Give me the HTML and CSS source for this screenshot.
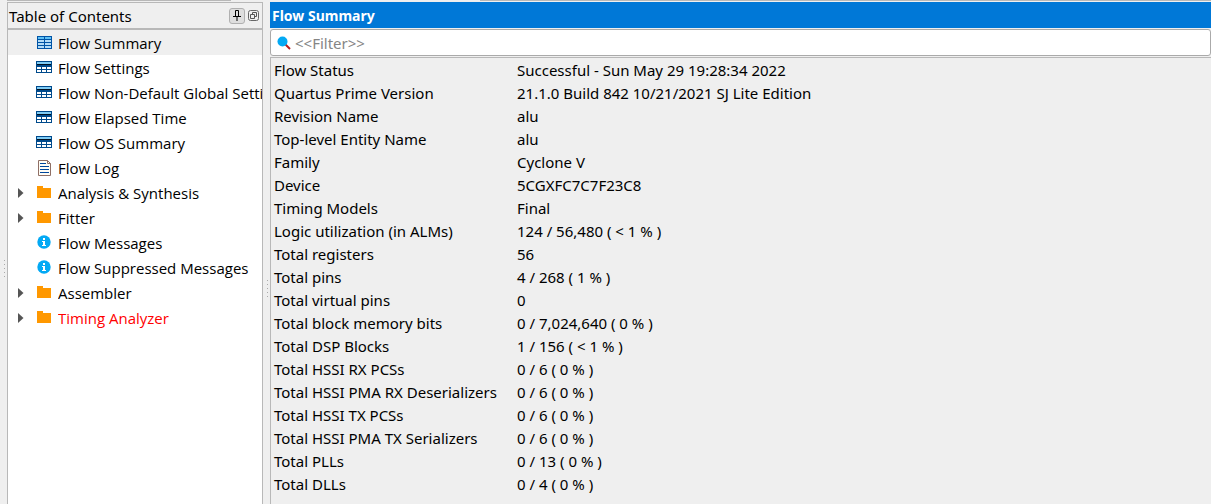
FILE: index.html
```html
<!DOCTYPE html>
<html lang="en">
<head>
<meta charset="utf-8">
<meta name="viewport" content="width=device-width, initial-scale=1">
<title>Flow Summary</title>
<link rel="stylesheet" href="styles.css">
</head>
<body>
<svg class="defs" aria-hidden="true">
  <symbol id="sheet" viewBox="0 0 16 14">
    <path fill="#0054a6" d="M1 1h15v13H1z"/>
    <path fill="#5fc0f5" d="M2 2h6v2H2zm7 0h6v2H9z"/>
    <path fill="#b3dcf7" d="M2 5h6v2H2zm7 0h6v2H9zM2 8h6v2H2zm7 0h6v2H9zM2 11h6v2H2zm7 0h6v2H9z"/>
  </symbol>
  <symbol id="table" viewBox="0 0 16 14">
    <path fill="#004a8c" d="M0 1h16v12H0z"/>
    <path fill="#7fccf5" d="M1 2h14v2H1z"/>
    <path fill="#001020" d="M1 4h14v1H1z"/>
    <path fill="#fff" d="M1 7h4v2H1zm5 0h4v2H6zm5 0h4v2h-4zM1 10h4v2H1zm5 0h4v2H6zm5 0h4v2h-4z"/>
  </symbol>
  <symbol id="log" viewBox="0 0 14 16">
    <path fill="#fffdf5" stroke="#8f6f65" d="M1.500.5h9l3 3v12h-12z"/>
    <path fill="none" stroke="#8f6f65" d="M10.500.5v3h3"/>
    <path stroke="#00479c" d="M3 3.500h6M3 6.500h9M3 9.500h9M3 12.500h9"/>
  </symbol>
  <symbol id="folder" viewBox="0 0 14 12">
    <path fill="#ff9800" d="M0 0h6v2h8v10H0z"/>
  </symbol>
  <symbol id="info" viewBox="0 0 14 14">
    <circle cx="7" cy="7" r="6.700" fill="#03a9f4"/>
    <path fill="#fff" d="M6 3h2v2H6zM5 6h3v4h1v1H5v-1h1V7H5z"/>
  </symbol>
  <symbol id="arrow" viewBox="0 0 6 10">
    <path fill="#555" d="M0 0l5.500 5L0 10z"/>
  </symbol>
</svg>

<div class="window">
  <div class="edge" aria-hidden="true"><span class="edge-left"></span><span class="edge-right"></span></div>
  <div class="workspace">
    <div class="grip grip-outer" aria-hidden="true"><i></i><i></i><i></i><i></i><i></i></div>

    <nav class="contents" aria-labelledby="toc-title">
      <header class="contents-header">
        <h2 id="toc-title">Table of Contents</h2>
        <button class="tool pin" type="button" aria-label="Pin panel">
          <svg width="8" height="11" viewBox="0 0 8 11"><path fill="none" stroke="#000" d="M2.500 6V.5h3V6M0 6.500h8M4 7v4"/><path stroke="#000" d="M5.500 1v5"/></svg>
        </button>
        <button class="tool" type="button" aria-label="Detach panel">
          <svg width="11" height="11" viewBox="0 0 11 11"><rect x=".5" y=".5" width="10" height="10" rx="2" fill="none" stroke="#666"/><path fill="none" stroke="#555" d="M4.500 4V2.500h4v4H7M2.500 4.500h4v4h-4z"/></svg>
        </button>
      </header>
      <ul class="tree">
        <li class="selected" aria-current="true"><svg class="icon"><use href="#sheet" width="16" height="14"/></svg><span>Flow Summary</span></li>
        <li><svg class="icon"><use href="#table" width="16" height="14"/></svg><span>Flow Settings</span></li>
        <li><svg class="icon"><use href="#table" width="16" height="14"/></svg><span>Flow Non-Default Global Setti</span></li>
        <li><svg class="icon"><use href="#table" width="16" height="14"/></svg><span>Flow Elapsed Time</span></li>
        <li><svg class="icon"><use href="#table" width="16" height="14"/></svg><span>Flow OS Summary</span></li>
        <li><svg class="icon"><use href="#log" x="1" width="14" height="16"/></svg><span>Flow Log</span></li>
        <li><button class="expander" type="button" aria-label="Expand Analysis &amp; Synthesis"><svg width="6" height="10"><use href="#arrow"/></svg></button><svg class="icon"><use href="#folder" x="1" y="1" width="14" height="12"/></svg><span>Analysis &amp; Synthesis</span></li>
        <li><button class="expander" type="button" aria-label="Expand Fitter"><svg width="6" height="10"><use href="#arrow"/></svg></button><svg class="icon"><use href="#folder" x="1" y="1" width="14" height="12"/></svg><span>Fitter</span></li>
        <li><svg class="icon"><use href="#info" x="1" width="14" height="14"/></svg><span>Flow Messages</span></li>
        <li><svg class="icon"><use href="#info" x="1" width="14" height="14"/></svg><span>Flow Suppressed Messages</span></li>
        <li><button class="expander" type="button" aria-label="Expand Assembler"><svg width="6" height="10"><use href="#arrow"/></svg></button><svg class="icon"><use href="#folder" x="1" y="1" width="14" height="12"/></svg><span>Assembler</span></li>
        <li class="failing"><button class="expander" type="button" aria-label="Expand Timing Analyzer"><svg width="6" height="10"><use href="#arrow"/></svg></button><svg class="icon"><use href="#folder" x="1" y="1" width="14" height="12"/></svg><span>Timing Analyzer</span></li>
      </ul>
    </nav>

    <div class="grip grip-inner" aria-hidden="true"><i></i><i></i><i></i><i></i><i></i></div>

    <main class="report">
      <h1>Flow Summary</h1>
      <label class="filter">
        <svg width="14" height="14" viewBox="0 0 14 14" aria-hidden="true"><path stroke="#b71c1c" stroke-width="2" d="M8.500 8.500l4.500 4.500"/><circle cx="5.500" cy="5.500" r="5" fill="#03a9f4"/></svg>
        <input type="text" placeholder="&lt;&lt;Filter&gt;&gt;" aria-label="Filter">
      </label>
      <div class="results">
        <table>
          <tbody>
            <tr><th scope="row">Flow Status</th><td>Successful - Sun May 29 19:28:34 2022</td></tr>
            <tr><th scope="row">Quartus Prime Version</th><td>21.1.0 Build 842 10/21/2021 SJ Lite Edition</td></tr>
            <tr><th scope="row">Revision Name</th><td>alu</td></tr>
            <tr><th scope="row">Top-level Entity Name</th><td>alu</td></tr>
            <tr><th scope="row">Family</th><td>Cyclone V</td></tr>
            <tr><th scope="row">Device</th><td>5CGXFC7C7F23C8</td></tr>
            <tr><th scope="row">Timing Models</th><td>Final</td></tr>
            <tr><th scope="row">Logic utilization (in ALMs)</th><td>124 / 56,480 ( &lt; 1 % )</td></tr>
            <tr><th scope="row">Total registers</th><td>56</td></tr>
            <tr><th scope="row">Total pins</th><td>4 / 268 ( 1 % )</td></tr>
            <tr><th scope="row">Total virtual pins</th><td>0</td></tr>
            <tr><th scope="row">Total block memory bits</th><td>0 / 7,024,640 ( 0 % )</td></tr>
            <tr><th scope="row">Total DSP Blocks</th><td>1 / 156 ( &lt; 1 % )</td></tr>
            <tr><th scope="row">Total HSSI RX PCSs</th><td>0 / 6 ( 0 % )</td></tr>
            <tr><th scope="row">Total HSSI PMA RX Deserializers</th><td>0 / 6 ( 0 % )</td></tr>
            <tr><th scope="row">Total HSSI TX PCSs</th><td>0 / 6 ( 0 % )</td></tr>
            <tr><th scope="row">Total HSSI PMA TX Serializers</th><td>0 / 6 ( 0 % )</td></tr>
            <tr><th scope="row">Total PLLs</th><td>0 / 13 ( 0 % )</td></tr>
            <tr><th scope="row">Total DLLs</th><td>0 / 4 ( 0 % )</td></tr>
          </tbody>
        </table>
      </div>
    </main>
  </div>
</div>
</body>
</html>
```
FILE: styles.css
```css
* {
  box-sizing: border-box;
}

body {
  margin: 0;
  background: #efefef;
  color: #000;
  font: 15px/23px "Noto Sans", "Open Sans", sans-serif;
}

.defs {
  display: none;
}

.window {
  display: flex;
  flex-direction: column;
  min-height: 100vh;
}

.edge {
  display: flex;
  justify-content: space-between;
  height: 2px;
  padding-left: 7px;
}

.edge span {
  height: 1px;
  background: #b8b8b8;
}

.edge-left {
  width: 224px;
}

.edge-right {
  width: calc(100% - 473px);
}

.workspace {
  display: flex;
  flex: 1;
}

.grip {
  display: flex;
  flex: none;
  flex-direction: column;
  gap: 3px;
}

.grip i {
  width: 1px;
  height: 1px;
  background: #aaa;
}

.grip-outer {
  width: 7px;
  padding: 258px 0 0 4px;
}

.grip-inner {
  width: 7px;
  padding: 278px 0 0 4px;
}

.contents {
  flex: none;
  width: 256px;
  border: 1px solid #b8b8b8;
  border-bottom: 0;
  background: #fff;
}

.contents-header {
  display: flex;
  align-items: center;
  height: 27px;
  padding: 0 3px 0 1px;
  border-bottom: 2px solid #b8b8b8;
  background: #efefef;
}

.contents-header h2 {
  flex: 1;
  margin: 0;
  padding-top: 2px;
  font-size: 15px;
  font-weight: 400;
}

.tool {
  display: flex;
  align-items: center;
  justify-content: center;
  padding: 0;
  border: 0;
  background: none;
}

.pin {
  width: 16px;
  height: 16px;
  margin-right: 3px;
  border: 1px solid #b0b0b0;
  border-radius: 3px;
  background: #dedede;
}

.tree {
  margin: 0;
  padding: 0;
  font-family: "Open Sans", "Noto Sans", sans-serif;
  list-style: none;
}

.tree li {
  display: flex;
  align-items: center;
  height: 25px;
  padding: 0 0 0 28px;
}

.tree li:has(.expander) {
  padding-left: 10px;
}

.tree li span {
  flex: 1;
  overflow: hidden;
  padding-top: 2px;
  white-space: nowrap;
}

.tree .selected {
  background: #efefef;
}

.tree .failing {
  color: #f00;
}

.icon {
  flex: none;
  width: 16px;
  height: 16px;
  margin-right: 6px;
}

.expander {
  display: flex;
  width: 18px;
  padding: 0;
  border: 0;
  background: none;
}

.report {
  display: flex;
  flex: 1;
  flex-direction: column;
  min-width: 0;
}

.report h1 {
  margin: 0 0 1px;
  padding: 2px 2px 1px;
  background: #0078d7;
  color: #fff;
  font-size: 14px;
  line-height: 23px;
}

.filter {
  display: flex;
  align-items: center;
  gap: 4px;
  height: 27px;
  margin-bottom: 1px;
  padding-left: 6px;
  border: 1px solid #aaa;
  border-radius: 3px;
  background: #fff;
}

.filter input {
  flex: 1;
  min-width: 0;
  padding: 2px 0 0;
  border: 0;
  outline: 0;
  background: none;
  font: inherit;
}

.filter input::placeholder {
  color: #858585;
  opacity: 1;
}

.results {
  flex: 1;
  padding: 1px 0 0 3px;
  border: solid #b8b8b8;
  border-width: 1px 0 0 1px;
}

.results table {
  border-collapse: collapse;
}

.results th,
.results td {
  height: 23px;
  padding: 0;
  font-weight: 400;
  text-align: left;
  white-space: nowrap;
}

.results th {
  width: 243px;
}
```
